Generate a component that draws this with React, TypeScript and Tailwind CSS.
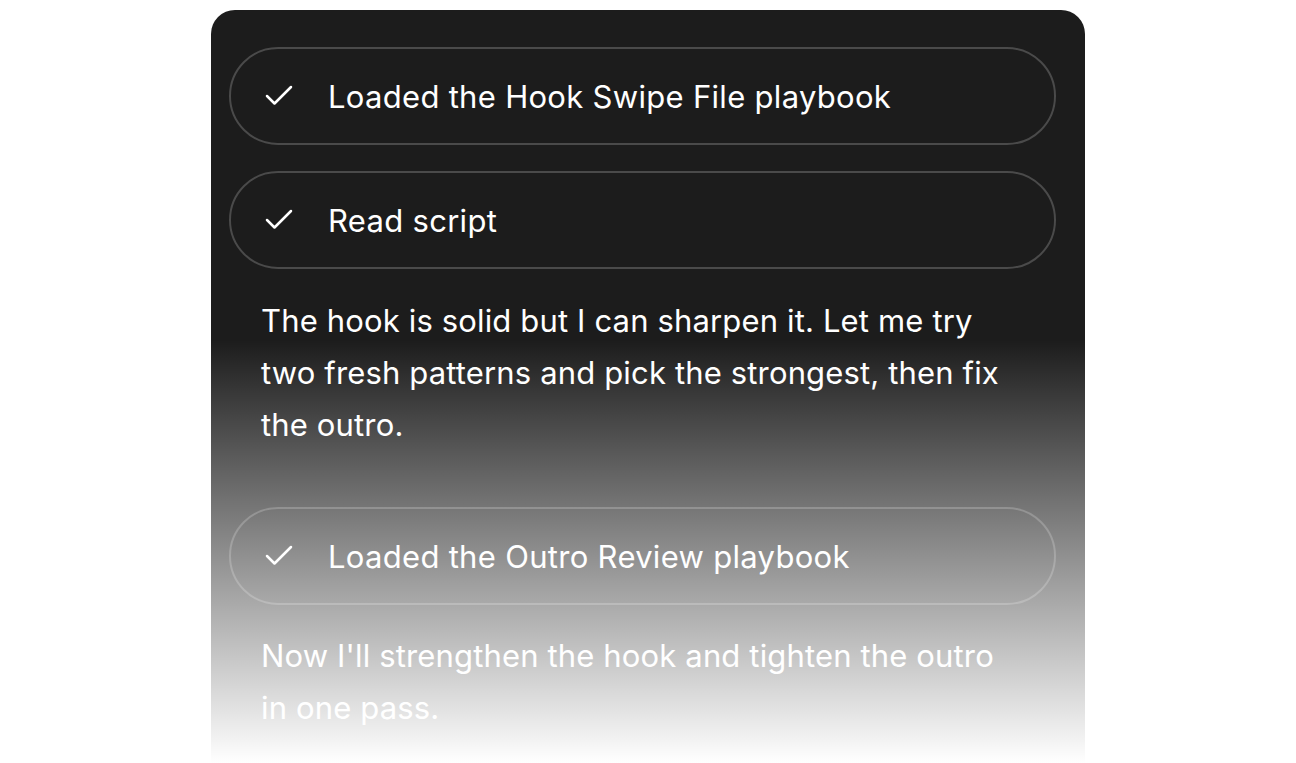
import { Check } from "lucide-react";

const Step = ({ label }: { label: string }) => {
  return (
    <div className="flex items-center h-[98px] rounded-full border-2 border-[#4a4a4a] pl-[30px] gap-[31px]">
      <Check size={36} strokeWidth={1.7} className="text-white shrink-0" />
      <span className="text-[31px] tracking-[0.3px] text-white leading-none">{label}</span>
    </div>
  );
};

const App = () => {
  return (
    <div className="min-h-[763px] bg-white flex justify-center pt-[10px] overflow-hidden font-['Inter',sans-serif]">
      <div className="relative w-[874px] h-[800px] rounded-t-[24px] bg-[#1c1c1c] pt-[37px] pl-[18px] pr-[29px] overflow-hidden">
        <div className="flex flex-col gap-[26px]">
          <Step label="Loaded the Hook Swipe File playbook" />
          <Step label="Read script" />
          <p className="px-[32px] text-[31px] tracking-[0.15px] leading-[52px] text-white mb-[30px]">
            The hook is solid but I can sharpen it. Let me try
            <br />
            two fresh patterns and pick the strongest, then fix
            <br />
            the outro.
          </p>
          <Step label="Loaded the Outro Review playbook" />
          <p className="-mt-[1px] px-[32px] text-[31px] tracking-[0.15px] leading-[52px] text-white">
            Now I'll strengthen the hook and tighten the outro
            <br />
            in one pass.
          </p>
        </div>
        <div className="absolute inset-x-0 top-[330px] h-[423px] bg-gradient-to-b from-white/0 to-white pointer-events-none" />
        <div className="absolute inset-x-0 top-[753px] bottom-0 bg-white pointer-events-none" />
      </div>
    </div>
  );
};

export default App;
